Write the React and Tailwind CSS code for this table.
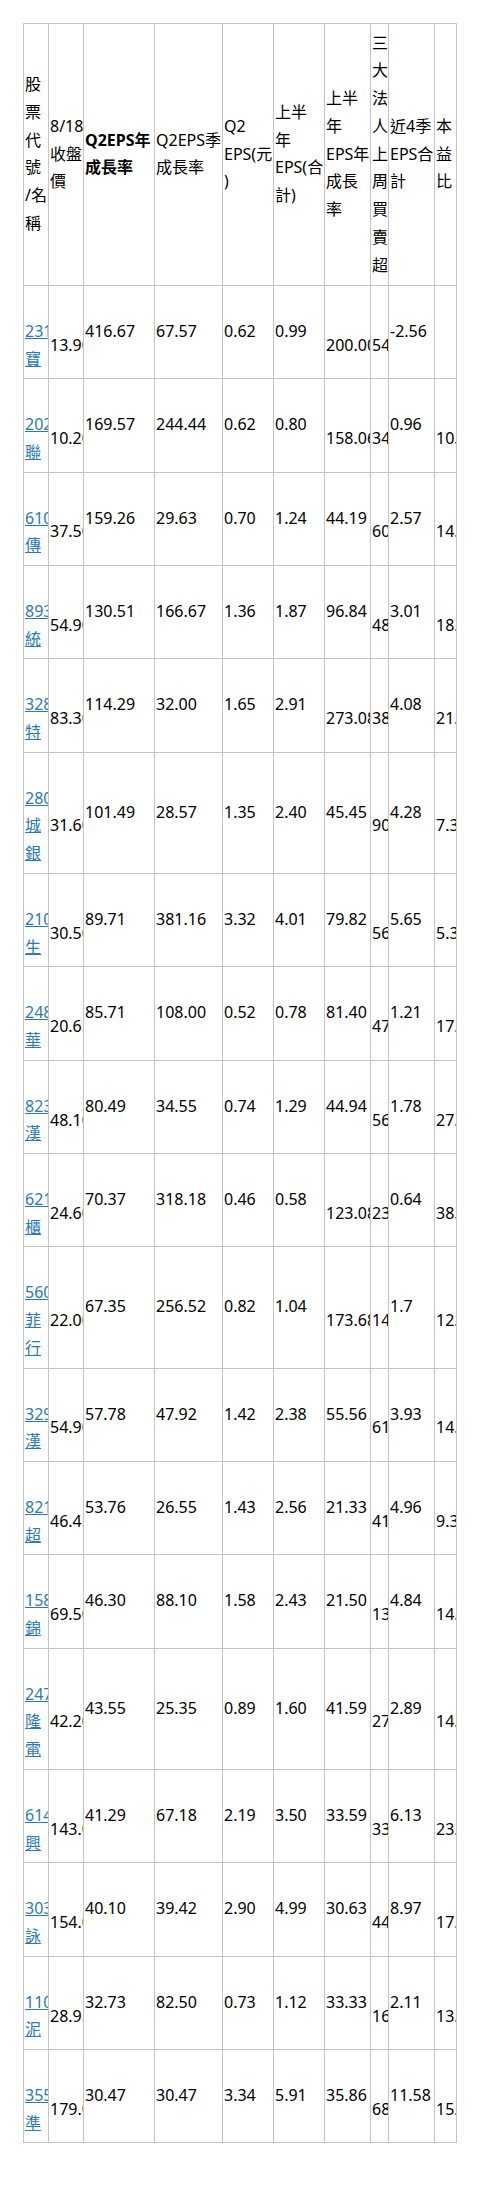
import React from "react";

const headers = [
  { lines: ["股", "票", "代", "號", "/名", "稱"] },
  { lines: ["8/18", "收盤", "價"] },
  { lines: ["Q2EPS年", "成長率"], bold: true },
  { lines: ["Q2EPS季", "成長率"] },
  { lines: ["Q2", "EPS(元", ")"] },
  { lines: ["上半", "年", "EPS(合", "計)"] },
  { lines: ["上半", "年", "EPS年", "成長", "率"] },
  { lines: ["三", "大", "法", "人", "上", "周", "買", "賣", "超"] },
  { lines: ["近4季", "EPS合", "計"] },
  { lines: ["本", "益", "比"] },
];

const widths = [25, 35, 71, 68, 51, 51, 46, 18, 46, 22];

// code, name chars shown below the code, close, then the numbers
const rows = [
  ["2312", ["寶"], "13.90", "416.67", "67.57", "0.62", "0.99", "200.00", "54", "-2.56", ""],
  ["2024", ["聯"], "10.20", "169.57", "244.44", "0.62", "0.80", "158.06", "34", "0.96", "10.63"],
  ["6108", ["傳"], "37.50", "159.26", "29.63", "0.70", "1.24", "44.19", "60", "2.57", "14.59"],
  ["8933", ["統"], "54.90", "130.51", "166.67", "1.36", "1.87", "96.84", "48", "3.01", "18.24"],
  ["3288", ["特"], "83.30", "114.29", "32.00", "1.65", "2.91", "273.08", "38", "4.08", "21.42"],
  ["2809", ["城", "銀"], "31.60", "101.49", "28.57", "1.35", "2.40", "45.45", "90", "4.28", "7.38"],
  ["2107", ["生"], "30.50", "89.71", "381.16", "3.32", "4.01", "79.82", "56", "5.65", "5.39"],
  ["2488", ["華"], "20.65", "85.71", "108.00", "0.52", "0.78", "81.40", "47", "1.21", "17.07"],
  ["8237", ["漢"], "48.10", "80.49", "34.55", "0.74", "1.29", "44.94", "56", "1.78", "27.02"],
  ["6217", ["櫃"], "24.60", "70.37", "318.18", "0.46", "0.58", "123.08", "23", "0.64", "38.44"],
  ["5609", ["菲", "行"], "22.00", "67.35", "256.52", "0.82", "1.04", "173.68", "14", "1.7", "12.94"],
  ["3299", ["漢"], "54.90", "57.78", "47.92", "1.42", "2.38", "55.56", "61", "3.93", "14.0"],
  ["8213", ["超"], "46.45", "53.76", "26.55", "1.43", "2.56", "21.33", "41", "4.96", "9.36"],
  ["1582", ["錦"], "69.50", "46.30", "88.10", "1.58", "2.43", "21.50", "13", "4.84", "14.36"],
  ["2476", ["隆", "電"], "42.20", "43.55", "25.35", "0.89", "1.60", "41.59", "27", "2.89", "14.60"],
  ["6147", ["興"], "143.00", "41.29", "67.18", "2.19", "3.50", "33.59", "33", "6.13", "23.33"],
  ["3032", ["詠"], "154.00", "40.10", "39.42", "2.90", "4.99", "30.63", "44", "8.97", "17.17"],
  ["1104", ["泥"], "28.95", "32.73", "82.50", "0.73", "1.12", "33.33", "16", "2.11", "13.72"],
  ["3557", ["準"], "179.00", "30.47", "30.47", "3.34", "5.91", "35.86", "68", "11.58", "15.46"],
];

// a value that fits its column sits one half line up, one that runs over sits in the middle
function isMid(col, v) {
  if (col === 1 || col === 7 || col === 9) return true;
  if (col === 6) return v.length > 5;
  return false;
}

function Cell({ col, v }) {
  if (!v) return null;
  if (isMid(col, v)) return <div className="whitespace-nowrap">{v}</div>;
  return <div className="whitespace-nowrap pb-[27.75px]">{v}</div>;
}

export default function App() {
  return (
    <div className="bg-white min-h-[2189px] pt-[23px] pl-[23px] text-black text-[16px] leading-[27.75px] font-['Noto_Sans','Noto_Sans_CJK_TC',sans-serif]">
      <table className="border-collapse table-fixed w-[433px]">
        <colgroup>
          {widths.map((w, i) => (
            <col key={i} style={{ width: w }} />
          ))}
        </colgroup>
        <thead>
          <tr>
            {headers.map((h, i) => (
              <th
                key={i}
                className={`border border-[#c4c4c4] px-px py-[5.5px] align-middle text-left overflow-hidden ${
                  h.bold ? "font-bold" : "font-normal"
                }`}
              >
                {h.lines.map((l, j) => (
                  <div key={j} className="whitespace-nowrap">
                    {l}
                  </div>
                ))}
              </th>
            ))}
          </tr>
        </thead>
        <tbody>
          {rows.map((r, i) => (
            <tr key={i}>
              <td className="border border-[#c4c4c4] px-px pt-8 pb-[4.9px] align-middle overflow-hidden">
                <a href="#" className="text-[#2b7ab6] underline whitespace-nowrap">
                  {r[0]}
                  {r[1].map((c, j) => (
                    <React.Fragment key={j}>
                      <br />
                      {c}
                    </React.Fragment>
                  ))}
                </a>
              </td>
              {r.slice(2).map((v, j) => (
                <td
                  key={j}
                  className="border border-[#c4c4c4] px-px pt-8 pb-[4.9px] align-middle overflow-hidden"
                >
                  <Cell col={j + 1} v={v} />
                </td>
              ))}
            </tr>
          ))}
        </tbody>
      </table>
    </div>
  );
}
